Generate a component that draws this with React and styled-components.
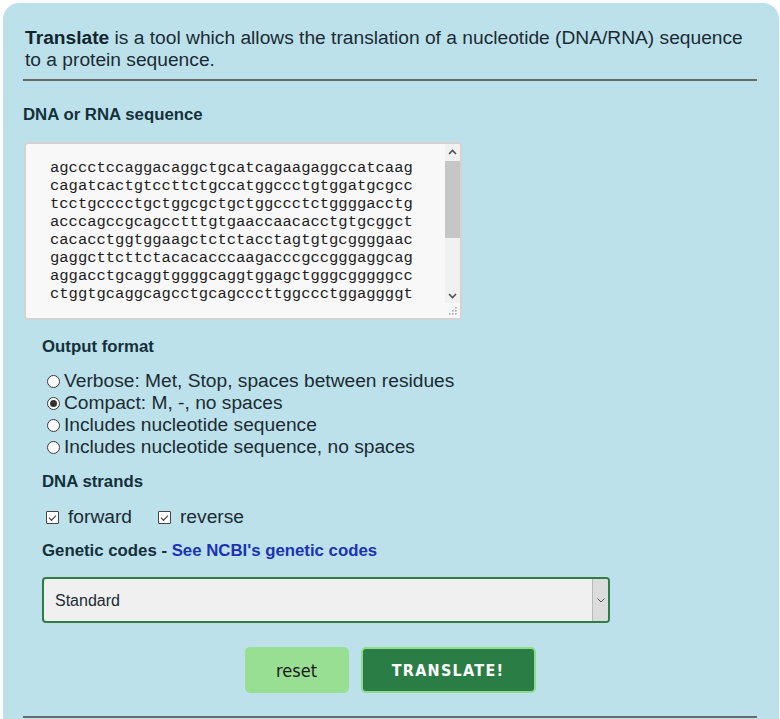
import React, { useState } from "react";
import styled, { createGlobalStyle } from "styled-components";

const Global = createGlobalStyle`
  html, body { margin: 0; padding: 0; background: #ffffff; }
  body { font-family: "Liberation Sans", Arial, sans-serif; color: #1b2b33; }
  * { box-sizing: border-box; }
`;

const Panel = styled.div`
  margin: 3px 0 0 3px;
  width: 776px;
  background: #bce1eb;
  border-radius: 16px;
  padding: 24px 21px 0 20px;
  display: flex;
  flex-direction: column;
  min-height: 730px;
`;

const Intro = styled.p`
  margin: 0 0 0 2px;
  font-size: 19.2px;
  line-height: 22px;
  color: #1b2b33;
  b { color: #12262f; }
`;

const Rule = styled.hr`
  margin: ${(p) => p.$mt}px 0 0 0;
  border: none;
  height: 2px;
  background: #666a6c;
  width: 734px;
`;

const Heading = styled.div`
  margin: ${(p) => p.$mt}px 0 0 0;
  font-size: 16.8px;
  line-height: 18px;
  font-weight: bold;
  color: #14303b;
`;

const Link = styled.a`
  color: #1a33b5;
  text-decoration: none;
`;

const SeqBox = styled.div`
  margin: 18px 0 0 1px;
  width: 438px;
  height: 178px;
  border: 2px solid #d3d3d3;
  border-radius: 4px;
  background: #f8f8f8;
  display: flex;
  overflow: hidden;
`;

const SeqArea = styled.textarea`
  flex: 1;
  min-width: 0;
  height: 100%;
  padding: 15px 24px 16px;
  border: none;
  background: transparent;
  font-family: "Liberation Mono", "Courier New", monospace;
  font-size: 15.5px;
  line-height: 18px;
  color: #1d1d1d;
  resize: none;
  outline: none;
  overflow: hidden;
`;

const ScrollCol = styled.div`
  width: 15px;
  display: flex;
  flex-direction: column;
  background: #f1f1f1;
`;

const ScrollBtn = styled.div`
  height: 15px;
  display: grid;
  place-items: center;
`;

const Track = styled.div`
  flex: 1;
  display: flex;
  flex-direction: column;
`;

const Thumb = styled.div`
  height: 77px;
  margin: 2px 0 0 0;
  background: #c6c6c6;
`;

const Corner = styled.div`
  height: 15px;
  background: #f8f8f8;
  display: grid;
  place-items: center;
`;

const Options = styled.div`
  padding-left: 19px;
  display: flex;
  flex-direction: column;
`;

const RadioList = styled.div`
  margin-top: 14px;
  display: flex;
  flex-direction: column;
`;

const OptionRow = styled.label`
  display: flex;
  align-items: center;
  height: 22px;
  font-size: 19.2px;
  color: #1b2b33;
  cursor: pointer;
`;

const Radio = styled.input.attrs({ type: "radio" })`
  appearance: none;
  margin: 1px 4px 0 5px;
  width: 13px;
  height: 13px;
  border-radius: 50%;
  border: 1px solid #3a3a3a;
  background: #fff;
  display: grid;
  place-items: center;
  &:checked::after {
    content: "";
    width: 7px;
    height: 7px;
    border-radius: 50%;
    background: #333;
  }
`;

const CheckRow = styled.div`
  margin-top: 15px;
  display: flex;
  align-items: center;
  gap: 22px;
  height: 22px;
`;

const Check = styled.input.attrs({ type: "checkbox" })`
  appearance: none;
  margin: 1px 9px 0 4px;
  width: 13px;
  height: 13px;
  border: 1px solid #444;
  border-radius: 1px;
  background: #fff;
  display: grid;
  place-items: center;
  &:checked::after {
    content: "";
    width: 6px;
    height: 3px;
    border-left: 1.5px solid #333;
    border-bottom: 1.5px solid #333;
    transform: translateY(-1px) rotate(-45deg);
  }
`;

const SelectBox = styled.div`
  margin-top: 17px;
  width: 568px;
  height: 46px;
  border: 2px solid #2d7d47;
  border-radius: 4px;
  background: #f0f0f0;
  display: flex;
  overflow: hidden;
`;

const Select = styled.select`
  appearance: none;
  flex: 1;
  border: none;
  background: transparent;
  padding: 0 11px;
  font-family: "Liberation Sans", Arial, sans-serif;
  font-size: 16px;
  color: #1b2b33;
  outline: none;
`;

const Arrow = styled.div`
  width: 16px;
  background: #dcdcdc;
  border-left: 1px solid #b8b8b8;
  display: grid;
  place-items: center;
`;

const Buttons = styled.div`
  margin-top: 24px;
  display: flex;
  justify-content: center;
  gap: 12px;
  width: 734px;
`;

const ResetBtn = styled.button`
  width: 104px;
  height: 46px;
  border: none;
  border-radius: 5px;
  background: #98de93;
  font-family: "DejaVu Sans Condensed", "DejaVu Sans", sans-serif;
  font-size: 18px;
  color: #1a1a1a;
  cursor: pointer;
`;

const GoBtn = styled.button`
  width: 175px;
  height: 46px;
  border: 2px solid #8fdc8d;
  border-radius: 5px;
  background: #2a7e45;
  font-family: "DejaVu Sans Condensed", "DejaVu Sans", sans-serif;
  font-weight: bold;
  font-size: 16px;
  letter-spacing: 1.3px;
  color: #ffffff;
  cursor: pointer;
`;

const SEQ = [
  "agccctccaggacaggctgcatcagaagaggccatcaag",
  "cagatcactgtccttctgccatggccctgtggatgcgcc",
  "tcctgcccctgctggcgctgctggccctctggggacctg",
  "acccagccgcagcctttgtgaaccaacacctgtgcggct",
  "cacacctggtggaagctctctacctagtgtgcggggaac",
  "gaggcttcttctacacacccaagacccgccgggaggcag",
  "aggacctgcaggtggggcaggtggagctgggcgggggcc",
  "ctggtgcaggcagcctgcagcccttggccctggaggggt",
].join("\n");

function Chevron({ up }) {
  return (
    <svg width="9" height="6" viewBox="0 0 9 6">
      <path
        d={up ? "M1 5 L4.5 1.5 L8 5" : "M1 1 L4.5 4.5 L8 1"}
        fill="none"
        stroke="#505050"
        strokeWidth="1.6"
      />
    </svg>
  );
}

function ChevronDown() {
  return (
    <svg width="8" height="5" viewBox="0 0 8 5">
      <path d="M0.5 0.5 L4 4 L7.5 0.5" fill="none" stroke="#555" strokeWidth="1" />
    </svg>
  );
}

function Grip() {
  return (
    <svg width="9" height="9" viewBox="0 0 9 9">
      {[
        [7, 1],
        [4, 4],
        [7, 4],
        [1, 7],
        [4, 7],
        [7, 7],
      ].map(([x, y]) => (
        <rect key={`${x}-${y}`} x={x} y={y} width="1.6" height="1.6" fill="#a8a8a8" />
      ))}
    </svg>
  );
}

export default function App() {
  const [fmt, setFmt] = useState("compact");
  const [fwd, setFwd] = useState(true);
  const [rev, setRev] = useState(true);

  const formats = [
    ["verbose", "Verbose: Met, Stop, spaces between residues"],
    ["compact", "Compact: M, -, no spaces"],
    ["withseq", "Includes nucleotide sequence"],
    ["withseqns", "Includes nucleotide sequence, no spaces"],
  ];

  return (
    <>
      <Global />
      <Panel>
        <Intro>
          <b>Translate</b> is a tool which allows the translation of a nucleotide (DNA/RNA) sequence to a
          protein sequence.
        </Intro>
        <Rule $mt={8} />
        <Heading $mt={25}>DNA or RNA sequence</Heading>
        <SeqBox>
          <SeqArea defaultValue={SEQ} spellCheck={false} />
          <ScrollCol>
            <ScrollBtn>
              <Chevron up />
            </ScrollBtn>
            <Track>
              <Thumb />
            </Track>
            <ScrollBtn>
              <Chevron />
            </ScrollBtn>
            <Corner>
              <Grip />
            </Corner>
          </ScrollCol>
        </SeqBox>
        <Options>
          <Heading $mt={18}>Output format</Heading>
          <RadioList>
            {formats.map(([v, label]) => (
              <OptionRow key={v}>
                <Radio name="fmt" checked={fmt === v} onChange={() => setFmt(v)} />
                {label}
              </OptionRow>
            ))}
          </RadioList>
          <Heading $mt={15}>DNA strands</Heading>
          <CheckRow>
            <OptionRow>
              <Check checked={fwd} onChange={() => setFwd(!fwd)} />
              forward
            </OptionRow>
            <OptionRow>
              <Check checked={rev} onChange={() => setRev(!rev)} />
              reverse
            </OptionRow>
          </CheckRow>
          <Heading $mt={14}>
            Genetic codes - <Link href="#">See NCBI's genetic codes</Link>
          </Heading>
          <SelectBox>
            <Select defaultValue="1">
              <option value="1">Standard</option>
              <option value="2">Vertebrate Mitochondrial</option>
              <option value="3">Yeast Mitochondrial</option>
            </Select>
            <Arrow>
              <ChevronDown />
            </Arrow>
          </SelectBox>
        </Options>
        <Buttons>
          <ResetBtn type="button">reset</ResetBtn>
          <GoBtn type="button">TRANSLATE!</GoBtn>
        </Buttons>
        <Rule $mt={23} />
      </Panel>
    </>
  );
}
